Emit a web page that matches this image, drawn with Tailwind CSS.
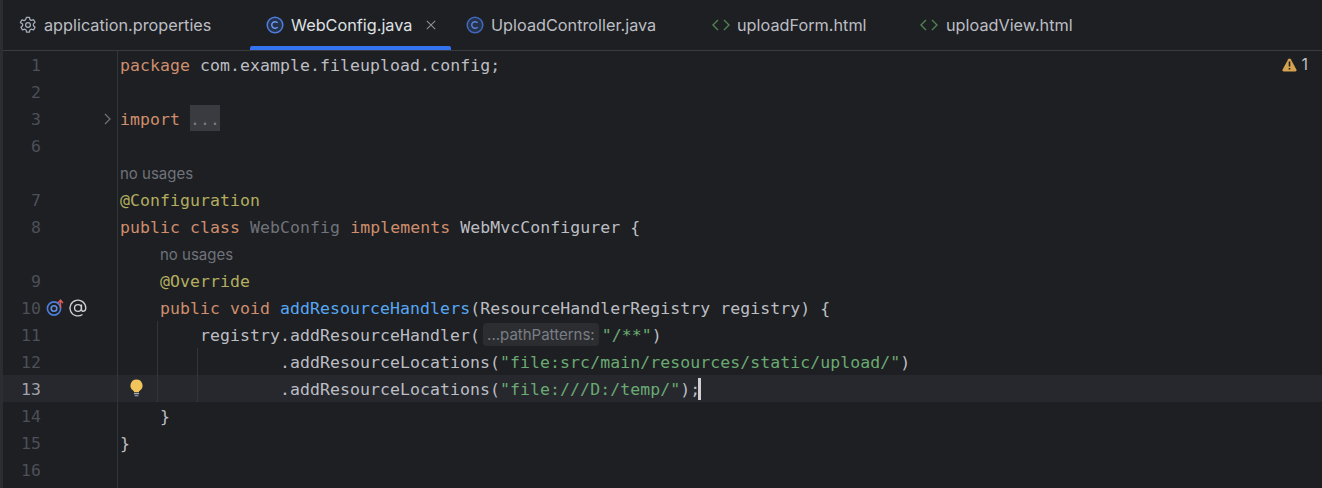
<!doctype html>
<html>
<head>
<meta charset="utf-8">
<title>WebConfig.java</title>
<script src="https://cdn.jsdelivr.net/npm/@tailwindcss/browser@4"></script>
</head>
<body class="bg-[#1e1f22] overflow-hidden">
<div class="w-[1322px] h-[488px] relative overflow-hidden bg-[#1e1f22] border-l-[3px] border-[#2b2d30]">
  <!-- tabs -->
  <div class="h-[51px] flex items-center border-b border-[#393b40] text-[16.25px] font-['Inter',sans-serif] text-[#bcbec4] -ml-[3px] pl-[3px]">
    <div class="w-[247px] h-full flex items-center pl-[16px] gap-[7px]">
      <svg class="w-[18px] h-[18px]" viewBox="0 0 16 16" fill="none" stroke="#a8adbd" stroke-width="1.1"><path d="M6.700 1.200h2.600l.4 2 1.200.7 2-.6 1.400 2.300-1.500 1.400v1.600l1.500 1.400-1.400 2.300-2-.6-1.200.7-.4 2H6.700l-.4-2-1.200-.7-2 .6-1.400-2.300 1.500-1.400V7.200L1.200 5.800l1.400-2.300 2 .6 1.200-.7z" stroke-linejoin="round"/><circle cx="8" cy="8" r="2.100"/></svg>
      <span>application.properties</span>
    </div>
    <div class="w-[201px] h-full flex items-center pl-[16px] relative text-[#dfe1e5]">
      <svg class="w-[18px] h-[18px] mr-[7px]" viewBox="0 0 18 18" fill="none"><circle cx="9" cy="9" r="7.800" fill="#25324d" stroke="#4d7ddb" stroke-width="1.500"/><path d="M11.600 6.900a3.300 3.300 0 1 0 0 4.200" stroke="#6f9cf0" stroke-width="1.400"/></svg>
      <span>WebConfig.java</span>
      <svg class="w-[10px] h-[10px] ml-[14px]" viewBox="0 0 10 10" stroke="#8c8f96" stroke-width="1.100"><path d="M.8.8l8.400 8.400M9.200.8L.8 9.200"/></svg>
      <div class="absolute left-0 right-0 bottom-0 h-[4px] bg-[#3574f0] rounded-t-[2px]"></div>
    </div>
    <div class="w-[245px] h-full flex items-center pl-[15px]">
      <svg class="w-[18px] h-[18px] mr-[7px]" viewBox="0 0 18 18" fill="none"><circle cx="9" cy="9" r="7.800" fill="#25324d" stroke="#3f68ba" stroke-width="1.500"/><path d="M11.600 6.900a3.300 3.300 0 1 0 0 4.200" stroke="#5b84d4" stroke-width="1.400"/></svg>
      <span>UploadController.java</span>
    </div>
    <div class="w-[208px] h-full flex items-center pl-[16px]">
      <svg class="w-[18px] h-[12px] mr-[7px]" viewBox="0 0 18 12" fill="none" stroke="#4e8452" stroke-width="1.400"><path d="M6 1L1 6l5 5M12 1l5 5-5 5"/></svg>
      <span>uploadForm.html</span>
    </div>
    <div class="h-full flex items-center pl-[16px]">
      <svg class="w-[18px] h-[12px] mr-[8px]" viewBox="0 0 18 12" fill="none" stroke="#4e8452" stroke-width="1.400"><path d="M6 1L1 6l5 5M12 1l5 5-5 5"/></svg>
      <span>uploadView.html</span>
    </div>
  </div>

  <!-- editor -->
  <div class="relative font-['DejaVu_Sans_Mono',monospace] text-[16.500px] tracking-[0.07px] leading-[29px] text-[#bcbec4] -ml-[3px] pl-[3px]">
    <div class="absolute left-[117px] top-0 h-[437px] w-px bg-[#313438]"></div>
    <div class="absolute left-[157px] top-[270px] h-[81px] w-px bg-[#313438] z-10"></div>
    <div class="absolute left-[197px] top-[297px] h-[54px] w-px bg-[#313438] z-10"></div>

    <div class="flex h-[27px]"><div class="w-[38px] text-right text-[#4b5059]">1</div><div class="w-[79px]"></div><div class="whitespace-pre"><span class="text-[#cf8e6d]">package</span> com.example.fileupload.config;</div></div>
    <div class="flex h-[27px]"><div class="w-[38px] text-right text-[#4b5059]">2</div></div>
    <div class="flex h-[27px]"><div class="w-[38px] text-right text-[#4b5059]">3</div><div class="w-[79px] flex items-center justify-end pr-[8px]"><svg class="w-[9px] h-[12px]" viewBox="0 0 9 12" fill="none" stroke="#6f737a" stroke-width="1.200"><path d="M2 1l5 5-5 5"/></svg></div><div class="whitespace-pre"><span class="text-[#cf8e6d]">import</span> <span class="inline-block h-[26px] leading-[29px] bg-[#393b40] text-[#7a7e85]">...</span></div></div>
    <div class="flex h-[27px]"><div class="w-[38px] text-right text-[#4b5059]">6</div></div>
    <div class="flex h-[27px]"><div class="w-[117px]"></div><div class="font-['Inter',sans-serif] text-[15px] leading-[29px] tracking-normal text-[#6f737a]">no usages</div></div>
    <div class="flex h-[27px]"><div class="w-[38px] text-right text-[#4b5059]">7</div><div class="w-[79px]"></div><div class="text-[#b3ae60]">@Configuration</div></div>
    <div class="flex h-[27px]"><div class="w-[38px] text-right text-[#4b5059]">8</div><div class="w-[79px]"></div><div class="whitespace-pre"><span class="text-[#cf8e6d]">public class</span> <span class="text-[#6f737a]">WebConfig</span> <span class="text-[#cf8e6d]">implements</span> WebMvcConfigurer {</div></div>
    <div class="flex h-[27px]"><div class="w-[117px]"></div><div class="pl-[40px] font-['Inter',sans-serif] text-[15px] leading-[29px] tracking-normal text-[#6f737a]">no usages</div></div>
    <div class="flex h-[27px]"><div class="w-[38px] text-right text-[#4b5059]">9</div><div class="w-[79px]"></div><div class="pl-[40px] text-[#b3ae60]">@Override</div></div>
    <div class="flex h-[27px]"><div class="w-[38px] text-right text-[#4b5059]">10</div>
      <div class="w-[79px] shrink-0 flex items-center pl-[5px] gap-[3px]">
        <svg class="w-[19px] h-[19px]" viewBox="0 0 19 19" fill="none"><circle cx="8" cy="10.500" r="6.600" stroke="#4d7ddb" stroke-width="1.700"/><circle cx="8" cy="10.500" r="2.800" stroke="#5f8fe8" stroke-width="1.600"/><path d="M14.500 10V2.500M12 5l2.500-3L17 5" stroke="#db5c5c" stroke-width="1.400"/></svg>
        <svg class="w-[20px] h-[20px]" viewBox="0 0 18 18" fill="none" stroke="#ced0d6" stroke-width="1.200"><circle cx="9" cy="9" r="3.100"/><path d="M12.100 5.900v4.300c0 2.600 3.900 2.300 3.900-1.200a7.100 7.100 0 1 0-3 5.800"/></svg>
      </div>
      <div class="pl-[40px] whitespace-pre"><span class="text-[#cf8e6d]">public void</span> <span class="text-[#56a8f5]">addResourceHandlers</span>(ResourceHandlerRegistry registry) {</div></div>
    <div class="flex h-[27px]"><div class="w-[38px] text-right text-[#4b5059]">11</div><div class="w-[79px]"></div><div class="pl-[80px] whitespace-pre flex">registry.addResourceHandler(<span class="h-[23px] self-center mx-[3px] px-[4px] rounded-[4px] bg-[#2b2d30] font-['Inter',sans-serif] text-[15px] leading-[23px] tracking-normal text-[#7a7e85]">...pathPatterns:</span><span><span class="text-[#6aab73]">"/**"</span>)</span></div></div>
    <div class="flex h-[27px]"><div class="w-[38px] text-right text-[#4b5059]">12</div><div class="w-[79px]"></div><div class="pl-[160px] whitespace-pre">.addResourceLocations(<span class="text-[#6aab73]">"file:src/main/resources/static/upload/"</span>)</div></div>
    <div class="flex h-[27px] bg-[#26282e]"><div class="w-[38px] text-right text-[#a1a3ab]">13</div><div class="w-[79px]"></div><div class="pl-[160px] relative whitespace-pre"><svg class="absolute left-[9px] top-[3px] w-[15px] h-[20px]" viewBox="0 0 16 20"><path d="M8 1a6.400 6.400 0 0 0-3.600 11.700c.7.5 1 1.100 1 1.800h5.200c0-.7.3-1.300 1-1.800A6.400 6.400 0 0 0 8 1z" fill="#f2c55c"/><path d="M5.300 16h5.400M6 18.200h4" stroke="#a8adbd" stroke-width="1.200"/></svg>.addResourceLocations(<span class="text-[#6aab73]">"file:///D:/temp/"</span>);<span class="absolute top-[3px] -ml-[2px] w-[3px] h-[22px] bg-[#ced0d6]"></span></div></div>
    <div class="flex h-[27px]"><div class="w-[38px] text-right text-[#4b5059]">14</div><div class="w-[79px]"></div><div class="pl-[40px]">}</div></div>
    <div class="flex h-[27px]"><div class="w-[38px] text-right text-[#4b5059]">15</div><div class="w-[79px]"></div><div>}</div></div>
    <div class="flex h-[27px]"><div class="w-[38px] text-right text-[#4b5059]">16</div></div>

    <!-- inspection widget -->
    <div class="absolute right-[14px] top-0 h-[27px] flex items-center gap-[4px] font-['Inter',sans-serif] text-[16px] leading-[27px] tracking-normal">
      <svg class="w-[15px] h-[14px]" viewBox="0 0 15 14"><path d="M7.500.5c.6 0 1 .3 1.300.8l5.600 10.200c.5 1-.1 2-1.200 2H1.800c-1.100 0-1.700-1-1.200-2L6.200 1.300C6.500.8 6.900.5 7.500.5z" fill="#d5a24e"/><path d="M7.500 3.500v5M7.500 10v1.600" stroke="#1e1f22" stroke-width="1.600"/></svg>
      <span>1</span>
    </div>
  </div>
</div>
</body>
</html>
